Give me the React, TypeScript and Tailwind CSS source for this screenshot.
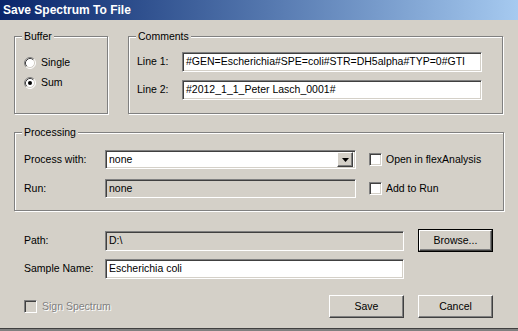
import React from 'react';

const sunken =
  'border border-t-[#808080] border-l-[#808080] border-b-white border-r-white shadow-[inset_1px_1px_0_#404040,inset_-1px_-1px_0_#d4d0c8]';
const raised =
  'border border-t-white border-l-white border-b-[#404040] border-r-[#404040] shadow-[inset_-1px_-1px_0_#808080]';

function GroupBox({ title, className, children }: { title: string; className: string; children: React.ReactNode }) {
  return (
    <div className={`relative border border-[#808080] shadow-[inset_1px_1px_0_#fff,1px_1px_0_#fff] ${className}`}>
      <span className="absolute -top-[8px] left-[7px] bg-[#d4d0c8] px-[2px] leading-[14px]">{title}</span>
      {children}
    </div>
  );
}

function Radio({ checked }: { checked?: boolean }) {
  return (
    <svg width="12" height="12" viewBox="0 0 12 12" className="shrink-0">
      <circle cx="6" cy="6" r="5" fill="#fff" />
      <path d="M2.11 9.89 A5.5 5.5 0 0 1 9.89 2.11" fill="none" stroke="#808080" strokeWidth="1" />
      <path d="M9.89 2.11 A5.5 5.5 0 0 1 2.11 9.89" fill="none" stroke="#fff" strokeWidth="1" />
      <path d="M2.82 9.18 A4.5 4.5 0 0 1 9.18 2.82" fill="none" stroke="#404040" strokeWidth="1" />
      <path d="M9.18 2.82 A4.5 4.5 0 0 1 2.82 9.18" fill="none" stroke="#d4d0c8" strokeWidth="1" />
      {checked && <circle cx="6" cy="6" r="2" fill="#000" />}
    </svg>
  );
}

function Check({ disabled }: { disabled?: boolean }) {
  return <div className={`w-[13px] h-[13px] shrink-0 ${sunken} ${disabled ? 'bg-[#d4d0c8]' : 'bg-white'}`} />;
}

function Button({ label, isDefault }: { label: string; isDefault?: boolean }) {
  if (isDefault) {
    return (
      <div className="w-[75px] h-[23px] border border-black">
        <div className={`w-full h-full flex items-center justify-center ${raised}`}>{label}</div>
      </div>
    );
  }
  return <div className={`w-[75px] h-[23px] flex items-center justify-center ${raised}`}>{label}</div>;
}

export default function App() {
  return (
    <div
      className="w-[518px] h-[331px] bg-[#d4d0c8] flex flex-col text-black text-[10.5px] overflow-hidden"
      style={{ fontFamily: '"Liberation Sans", Arial, sans-serif' }}
    >
      {/* title bar */}
      <div className="h-[20px] shrink-0 bg-gradient-to-r from-[#0a246a] to-[#a6caf0] flex items-center pl-[3px]">
        <span className="text-white font-bold text-[12px]">Save Spectrum To File</span>
      </div>

      <div className="flex-1 flex flex-col pl-[14px] pt-[16px]">
        {/* top row */}
        <div className="flex gap-[20px]">
          <GroupBox title="Buffer" className="w-[94px] h-[78px]">
            <div className="flex flex-col gap-[6px] pl-[9px] pt-[19px]">
              <div className="flex items-center gap-[5px] h-[14px]">
                <Radio />
                <span>Single</span>
              </div>
              <div className="flex items-center gap-[5px] h-[14px]">
                <Radio checked />
                <span>Sum</span>
              </div>
            </div>
          </GroupBox>
          <GroupBox title="Comments" className="w-[375px] h-[78px]">
            <div className="flex flex-col gap-[8px] pl-[8px] pt-[15px]">
              <div className="flex items-center">
                <span className="w-[45px]">Line 1:</span>
                <div className={`w-[300px] h-[20px] bg-white flex items-center pl-[3px] overflow-hidden whitespace-nowrap ${sunken}`}>
                  #GEN=Escherichia#SPE=coli#STR=DH5alpha#TYP=0#GTI
                </div>
              </div>
              <div className="flex items-center">
                <span className="w-[45px]">Line 2:</span>
                <div className={`w-[300px] h-[20px] bg-white flex items-center pl-[3px] overflow-hidden whitespace-nowrap ${sunken}`}>
                  #2012_1_1_Peter Lasch_0001#
                </div>
              </div>
            </div>
          </GroupBox>
        </div>

        {/* processing */}
        <GroupBox title="Processing" className="mt-[18px] w-[490px] h-[79px]">
          <div className="flex flex-col gap-[10px] pl-[9px] pt-[17px]">
            <div className="flex items-center">
              <span className="w-[81px]">Process with:</span>
              <div className={`w-[251px] h-[19px] bg-white flex items-center justify-between pl-[3px] pr-[2px] ${sunken}`}>
                <span>none</span>
                <div className={`w-[16px] h-[15px] bg-[#d4d0c8] flex items-center justify-center ${raised}`}>
                  <svg width="7" height="4" viewBox="0 0 7 4">
                    <path d="M0 0H7L3.5 4Z" fill="#000" />
                  </svg>
                </div>
              </div>
              <div className="flex items-center gap-[4px] ml-[13px]">
                <Check />
                <span>Open in flexAnalysis</span>
              </div>
            </div>
            <div className="flex items-center">
              <span className="w-[81px]">Run:</span>
              <div className={`w-[251px] h-[19px] bg-[#d4d0c8] flex items-center pl-[3px] ${sunken}`}>none</div>
              <div className="flex items-center gap-[4px] ml-[13px]">
                <Check />
                <span>Add to Run</span>
              </div>
            </div>
          </div>
        </GroupBox>

        {/* path / name */}
        <div className="flex items-center mt-[18px] pl-[10px]">
          <span className="w-[81px]">Path:</span>
          <div className={`w-[299px] h-[20px] bg-[#d4d0c8] flex items-center pl-[3px] ${sunken}`}>D:\</div>
          <div className="ml-[14px]">
            <Button label="Browse..." isDefault />
          </div>
        </div>
        <div className="flex items-center mt-[7px] pl-[10px]">
          <span className="w-[81px]">Sample Name:</span>
          <div className={`w-[299px] h-[20px] bg-white flex items-center pl-[3px] ${sunken}`}>Escherichia coli</div>
        </div>

        <div className="flex items-center mt-[16px] pl-[10px]">
          <div className="flex items-center gap-[5px] w-[305px]">
            <Check disabled />
            <span className="text-[#808080] [text-shadow:1px_1px_0_#fff]">Sign Spectrum</span>
          </div>
          <Button label="Save" />
          <div className="ml-[14px]">
            <Button label="Cancel" />
          </div>
        </div>
      </div>
      <div className="h-[3px] shrink-0 border-t border-[#404040] bg-[#808080]" />
    </div>
  );
}
